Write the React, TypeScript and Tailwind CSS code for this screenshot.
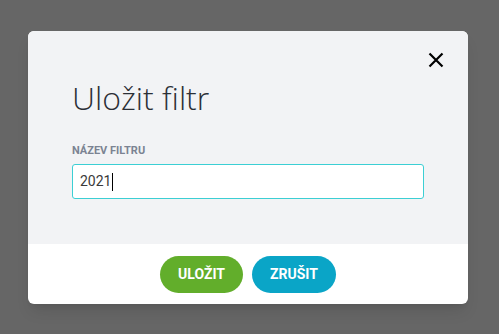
import React from "react";

const SaveFilterModal = () => {
  return (
    <div className="w-[440px] rounded-md overflow-hidden bg-white shadow-lg">
      <div className="bg-[#f2f3f5] h-[213px] px-11 relative">
        <button className="absolute right-[24px] top-[21px] w-[16px] h-[16px] text-black">
          <svg viewBox="0 0 16 16" className="w-full h-full" fill="none" stroke="currentColor" strokeWidth="2.2">
            <path d="M1.5 1.5 L14.5 14.5 M14.5 1.5 L1.5 14.5" />
          </svg>
        </button>
        <h2 className="pt-[47px] text-[32px] leading-[40px] font-light text-[#2b2f36] font-['Open_Sans',sans-serif]">
          Uložit filtr
        </h2>
        <label className="block mt-[26px] text-[11px] leading-[14px] font-bold text-[#7b8392] font-['Roboto',sans-serif]">
          NÁZEV FILTRU
        </label>
        {/* focused input, caret drawn so it stays in the shot */}
        <div className="mt-[6px] w-[352px] h-[35px] bg-white border border-[#3ccfd4] rounded-[3px] flex items-center px-[7px]">
          <span className="text-[14px] text-[#3a3a3a] font-['Roboto',sans-serif]">2021</span>
          <span className="ml-[1px] w-[1px] h-[18px] bg-black" />
        </div>
      </div>
      <div className="h-[60px] flex items-center justify-center gap-[9px]">
        <button className="w-[83px] h-[37px] rounded-full bg-[#62ae2b] text-white text-[14px] font-bold font-['Roboto',sans-serif]">
          ULOŽIT
        </button>
        <button className="w-[84px] h-[37px] rounded-full bg-[#0aa5c7] text-white text-[14px] font-bold font-['Roboto',sans-serif]">
          ZRUŠIT
        </button>
      </div>
    </div>
  );
};

export default function App() {
  return (
    <div className="w-[499px] h-[334px] bg-[#666666] pl-[28px] pt-[31px]">
      <SaveFilterModal />
    </div>
  );
}
